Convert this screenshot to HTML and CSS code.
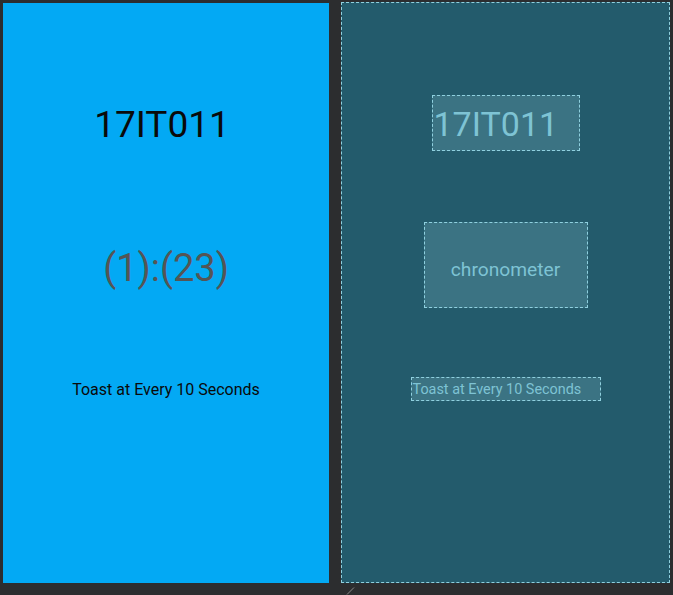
FILE: index.html
```html
<!DOCTYPE html>
<html>
<head>
<meta charset="utf-8">
<link rel="stylesheet" href="styles.css">
</head>
<body>
<div class="stage">
  <section class="panel design">
    <div class="slot slot-id"><span class="id-text">17IT011</span></div>
    <div class="slot slot-chrono"><span class="chrono-text">(1):(23)</span></div>
    <div class="slot slot-toast"><span class="toast-text">Toast at Every 10 Seconds</span></div>
  </section>
  <section class="panel blueprint">
    <div class="slot slot-id bp-box bp-left"><span class="bp-id">17IT011</span></div>
    <div class="slot slot-chrono bp-box"><span class="bp-chrono">chronometer</span></div>
    <div class="slot slot-toast bp-box bp-left"><span class="bp-toast">Toast at Every 10 Seconds</span></div>
  </section>
  <svg class="handle" width="10" height="8" viewBox="0 0 10 8"><line x1="1" y1="7.5" x2="8" y2="0.5" stroke="#8a8a8a" stroke-width="1"/></svg>
</div>
</body>
</html>
```
FILE: styles.css
```css
html, body {
  margin: 0;
  padding: 0;
  background: #2c2d2f;
  width: 673px;
  height: 595px;
  overflow: hidden;
  font-family: Roboto, "Liberation Sans", sans-serif;
}
.stage {
  position: relative;
  display: flex;
  align-items: flex-start;
  padding: 3px 0 0 3px;
  gap: 12px;
  height: 592px;
  box-sizing: border-box;
}
.panel {
  display: flex;
  flex-direction: column;
  align-items: center;
  box-sizing: border-box;
}
.design {
  width: 326px;
  height: 580px;
  background: #03a9f4;
  padding-top: 92px;
}
.blueprint {
  width: 329px;
  height: 581px;
  margin-top: -1px;
  background: #235b6c;
  border: 1px dashed #8fd0df;
  padding-top: 92px;
}
.slot {
  display: flex;
  align-items: center;
  justify-content: center;
  box-sizing: border-box;
}
.slot-id { width: 148px; height: 56px; }
.slot-chrono { width: 164px; height: 86px; margin-top: 71px; }
.slot-toast { width: 190px; height: 24px; margin-top: 69px; }

.id-text {
  font-size: 37px;
  color: #0a0a0a;
  margin-top: 2px;
  margin-left: -8px;
}
.chrono-text {
  font-size: 38px;
  color: #555555;
  margin-top: 6px;
}
.toast-text {
  font-size: 16px;
  color: #0a0a0a;
  white-space: nowrap;
}

.bp-box {
  background: #3b7383;
  border: 1px dashed #8fd0df;
  color: #7ec3d4;
}
.bp-left { justify-content: flex-start; padding-left: 1px; }
.bp-id {
  font-size: 34px;
  margin-top: 2px;
}
.bp-chrono {
  font-size: 19.2px;
  margin-top: 8px;
}
.bp-toast {
  font-size: 14.4px;
  white-space: nowrap;
}
.handle {
  position: absolute;
  left: 346px;
  top: 587px;
}
```
